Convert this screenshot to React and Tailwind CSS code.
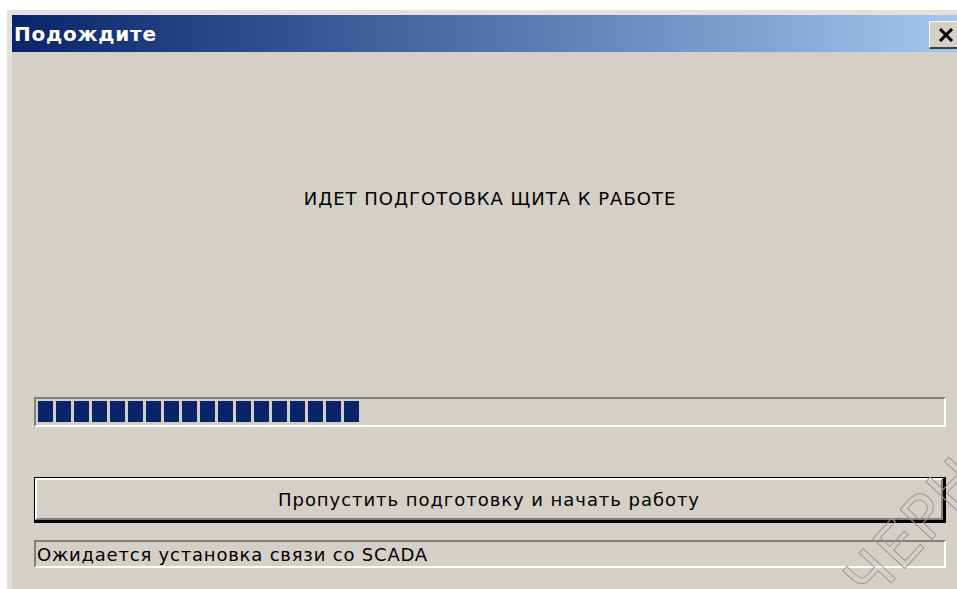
const BLOCKS = 18

function ProgressBar({ filled }) {
  return (
    <div className="h-[30px] border-2 border-t-[#808080] border-l-[#808080] border-b-white border-r-white px-[2px] pt-[2px]">
      <div className="flex gap-[3px]">
        {Array.from({ length: filled }).map((_, i) => (
          <div key={i} className="w-[15px] h-[21px] bg-[#0a246a]" />
        ))}
      </div>
    </div>
  )
}

export default function App() {
  return (
    <div className="relative w-[957px] h-[589px] overflow-hidden bg-white" style={{ fontFamily: '"DejaVu Sans", Verdana, sans-serif' }}>
      <div className="ml-[7px] mt-[10px] w-[962px] h-[600px] bg-[#d4d0c8] border-t-[5px] border-l-[5px] border-t-[#e4e1dc] border-l-[#e4e1dc]">
        {/* title bar */}
        <div className="h-[37px] flex items-center justify-between bg-gradient-to-r from-[#0a246a] to-[#a6caf0] pl-[2px]">
          <span className="text-white font-bold text-[20px] tracking-[0.8px]">
            Подождите
          </span>
          <div className="mr-[6px] w-[34px] h-[28px] mt-[3px] bg-[#d4d0c8] border-t border-l border-white border-b-2 border-r-2 border-b-[#404040] border-r-[#404040] flex items-center justify-center">
            <svg width="16" height="14" viewBox="0 0 16 14">
              <path d="M2 1 L14 13 M14 1 L2 13" stroke="black" strokeWidth="3" />
            </svg>
          </div>
        </div>

        {/* body */}
        <div className="w-[912px] ml-[22px] flex flex-col">
          <p className="mt-[135px] h-[24px] text-center text-[18px] leading-[24px] tracking-[1px] text-black">
            ИДЕТ ПОДГОТОВКА ЩИТА К РАБОТЕ
          </p>
          <div className="mt-[186px]">
            <ProgressBar filled={BLOCKS} />
          </div>
          <div className="mt-[50px] border border-black border-r-[3px] border-b-[3px]">
            <button className="w-full h-[42px] bg-[#d4d0c8] border-2 border-t-white border-l-white border-b-[#808080] border-r-[#808080] text-[18px] tracking-[0.95px] text-black">
              Пропустить подготовку и начать работу
            </button>
          </div>
          <div className="mt-[17px] h-[28px] border-2 border-t-[#808080] border-l-[#808080] border-b-white border-r-white flex items-center pl-[1px] text-[18px] tracking-[0.8px] text-black">
            Ожидается установка связи со SCADA
          </div>
        </div>
      </div>

      {/* draft watermark */}
      <div
        className="absolute left-[856px] top-[560px] text-[60px] leading-none tracking-[2px] pointer-events-none select-none text-transparent origin-left"
        style={{ WebkitTextStroke: '1px #9a9a9a', transform: 'rotate(-47deg)' }}
      >
        ЧЕРНОВИК
      </div>
    </div>
  )
}
